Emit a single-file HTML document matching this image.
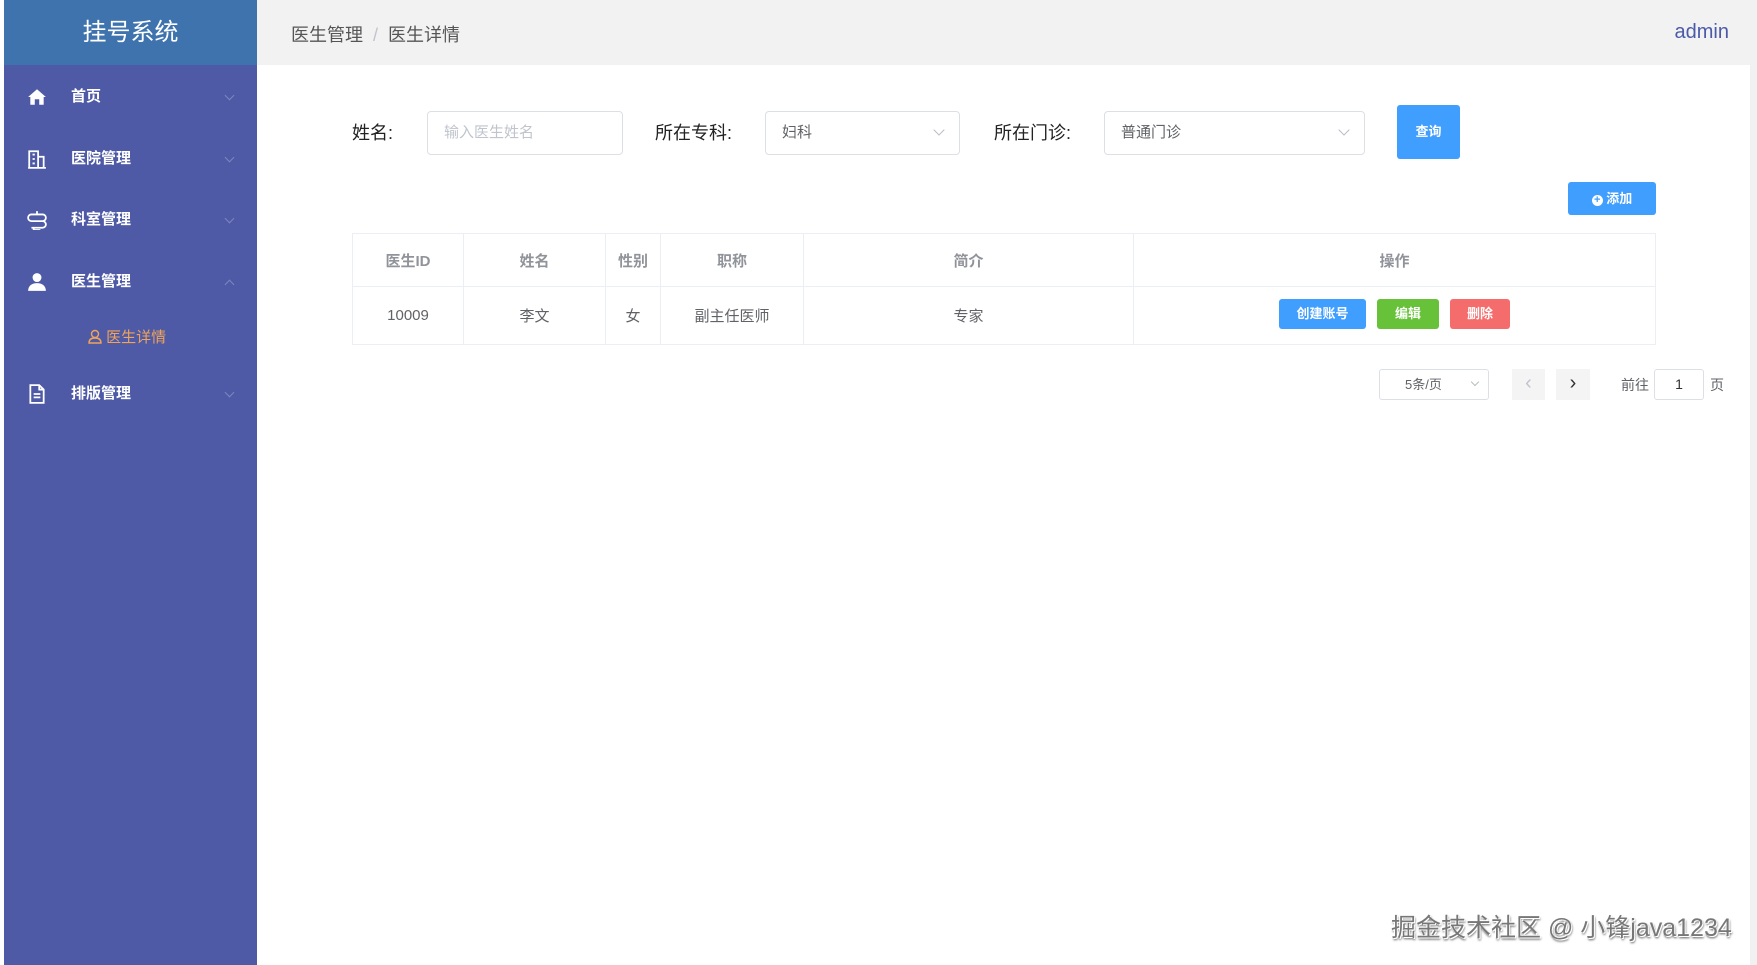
<!DOCTYPE html>
<html><head><meta charset="utf-8"><style>
*{box-sizing:border-box;margin:0;padding:0}
body{width:1757px;height:965px;overflow:hidden;background:#fff;font-family:"Liberation Sans","Noto Sans CJK SC",sans-serif;position:relative;color:#606266}
.abs{position:absolute}
#side{left:4px;top:0;width:253px;height:965px;background:#4e5aa5}
#logo{left:4px;top:0;width:253px;height:65px;background:#3f73ae;color:#fff;font-size:24px;text-align:center;line-height:65px}
.mi{left:4px;width:253px;height:40px;color:#fff;font-size:15px;font-weight:bold}
.mi .t{position:absolute;left:67px;top:0;line-height:40px}
.mi .ic{position:absolute;left:23px;top:10px;width:20px;height:20px}
.mi .ar{position:absolute;left:222px;top:15px;width:7px;height:7px;border-right:1px solid #7d86c0;border-bottom:1px solid #7d86c0;transform:rotate(45deg)}
.mi .ar.up{transform:rotate(-135deg);top:19px}
#hdr{left:257px;top:0;width:1493px;height:65px;background:#f2f2f2}
#scroll{left:1750px;top:0;width:7px;height:965px;background:#f1f1f1}
.lbl{font-size:18px;color:#222;top:119px}
.inp{border:1px solid #dcdfe6;border-radius:4px;height:44px;top:111px;background:#fff;font-size:15px;line-height:42px;padding-left:16px;color:#606266}
.chev{position:absolute;right:16px;top:14px;width:8px;height:8px;border-right:1px solid #b8bcc4;border-bottom:1px solid #b8bcc4;transform:rotate(45deg)}
.btn{color:#fff;font-size:13px;font-weight:bold;text-align:center;border-radius:3px}
table{border-collapse:collapse;position:absolute;left:352px;top:233px;width:1304px;font-size:15px}
td,th{border:1px solid #ebeef5;text-align:center}
th{height:53px;color:#909399;font-weight:bold}
td{height:58px;color:#606266}
</style></head><body>
<div id="side" class="abs"></div>
<div id="logo" class="abs">挂号系统</div>
<div class="mi abs" style="top:77px"><svg class="ic" viewBox="0 0 18 18"><path d="M1 9 L9 2 L17 9 L15 9 L15 16 L11 16 L11 11 L7 11 L7 16 L3 16 L3 9 Z" fill="#fff"/></svg><span class="t">首页</span><i class="ar"></i></div>
<div class="mi abs" style="top:139px"><svg class="ic" viewBox="0 0 18 18" fill="none" stroke="#fff" stroke-width="1.6"><path d="M2 17V2h8v15M10 7h5v10M1 17h16M5 5h2M5 9h2M5 13h2"/></svg><span class="t">医院管理</span><i class="ar"></i></div>
<div class="mi abs" style="top:200px"><svg class="ic" viewBox="0 0 18 18" fill="none" stroke="#fff" stroke-width="1.6"><path d="M9 1v3M4 4h10a3 3 0 0 1 0 6H4a3 3 0 0 1 0-6zM4 10h10a3 3 0 0 1 0 6H4M6 16v2h6"/></svg><span class="t">科室管理</span><i class="ar"></i></div>
<div class="mi abs" style="top:262px"><svg class="ic" viewBox="0 0 18 18"><circle cx="9" cy="5" r="4" fill="#fff"/><path d="M1 17c0-5 4-7 8-7s8 2 8 7z" fill="#fff"/></svg><span class="t">医生管理</span><i class="ar up"></i></div>
<div class="abs" style="left:88px;top:327px;color:#f0a35a;font-size:15px;line-height:22px"><svg width="14" height="15" viewBox="0 0 14 15" style="vertical-align:-2px" fill="none" stroke="#f0a35a" stroke-width="1.4"><circle cx="7" cy="5" r="3.5"/><path d="M1 14c0-4 3-5 6-5s6 1 6 5z"/></svg> 医生详情</div>
<div class="mi abs" style="top:374px"><svg class="ic" viewBox="0 0 18 18" fill="none" stroke="#fff" stroke-width="1.6"><path d="M3 1h8l4 4v12H3zM11 1v4h4M6 9h6M6 12h6"/></svg><span class="t">排版管理</span><i class="ar"></i></div>

<div id="hdr" class="abs"></div>
<div class="abs" style="left:291px;top:21px;font-size:18px;color:#555">医生管理 <span style="color:#c0c4cc;margin:0 5px">/</span> 医生详情</div>
<div class="abs" style="right:28px;top:21px;font-size:20px;color:#4b5aa8">admin</div>
<div id="scroll" class="abs"></div>

<div class="abs lbl" style="left:352px">姓名:</div>
<div class="abs inp" style="left:427px;width:196px;color:#c0c4cc">输入医生姓名</div>
<div class="abs lbl" style="left:655px">所在专科:</div>
<div class="abs inp" style="left:765px;width:195px">妇科<i class="chev"></i></div>
<div class="abs lbl" style="left:994px">所在门诊:</div>
<div class="abs inp" style="left:1104px;width:261px">普通门诊<i class="chev"></i></div>
<div class="abs btn" style="left:1397px;top:105px;width:63px;height:54px;line-height:54px;background:#409eff">查询</div>
<div class="abs btn" style="left:1568px;top:182px;width:88px;height:33px;line-height:33px;background:#409eff"><span style="display:inline-block;width:11px;height:11px;border-radius:50%;background:#fff;color:#409eff;font-size:11px;line-height:11px;vertical-align:0">+</span> 添加</div>

<table>
<tr><th style="width:111px">医生ID</th><th style="width:142px">姓名</th><th style="width:55px">性别</th><th style="width:143px">职称</th><th style="width:330px">简介</th><th>操作</th></tr>
<tr><td>10009</td><td>李文</td><td>女</td><td>副主任医师</td><td>专家</td><td></td></tr>
</table>
<div class="abs btn" style="left:1279px;top:299px;width:87px;height:30px;line-height:30px;background:#409eff">创建账号</div>
<div class="abs btn" style="left:1377px;top:299px;width:62px;height:30px;line-height:30px;background:#67c23a">编辑</div>
<div class="abs btn" style="left:1450px;top:299px;width:60px;height:30px;line-height:30px;background:#f56c6c">删除</div>

<div class="abs" style="left:1379px;top:369px;width:110px;height:31px;border:1px solid #dcdfe6;border-radius:3px;font-size:13px;line-height:29px;padding-left:25px">5条/页<i class="chev" style="top:9px;right:10px;width:6px;height:6px"></i></div>
<div class="abs" style="left:1512px;top:369px;width:33px;height:31px;background:#f4f4f5;color:#c0c4cc;text-align:center;line-height:29px;font-size:20px">‹</div>
<div class="abs" style="left:1556px;top:369px;width:34px;height:31px;background:#f4f4f5;color:#303133;text-align:center;line-height:29px;font-size:20px">›</div>
<div class="abs" style="left:1621px;top:375px;font-size:14px">前往</div>
<div class="abs" style="left:1654px;top:369px;width:50px;height:31px;border:1px solid #dcdfe6;border-radius:3px;text-align:center;line-height:29px;font-size:14px;color:#303133">1</div>
<div class="abs" style="left:1710px;top:375px;font-size:14px">页</div>

<div class="abs" style="left:1391px;top:908px;font-size:25px;color:#777;text-shadow:1px 1px 0 #fff,-1px -1px 0 #fff,1px 2px 2px #555">掘金技术社区 @ 小锋java1234</div>
</body></html>
